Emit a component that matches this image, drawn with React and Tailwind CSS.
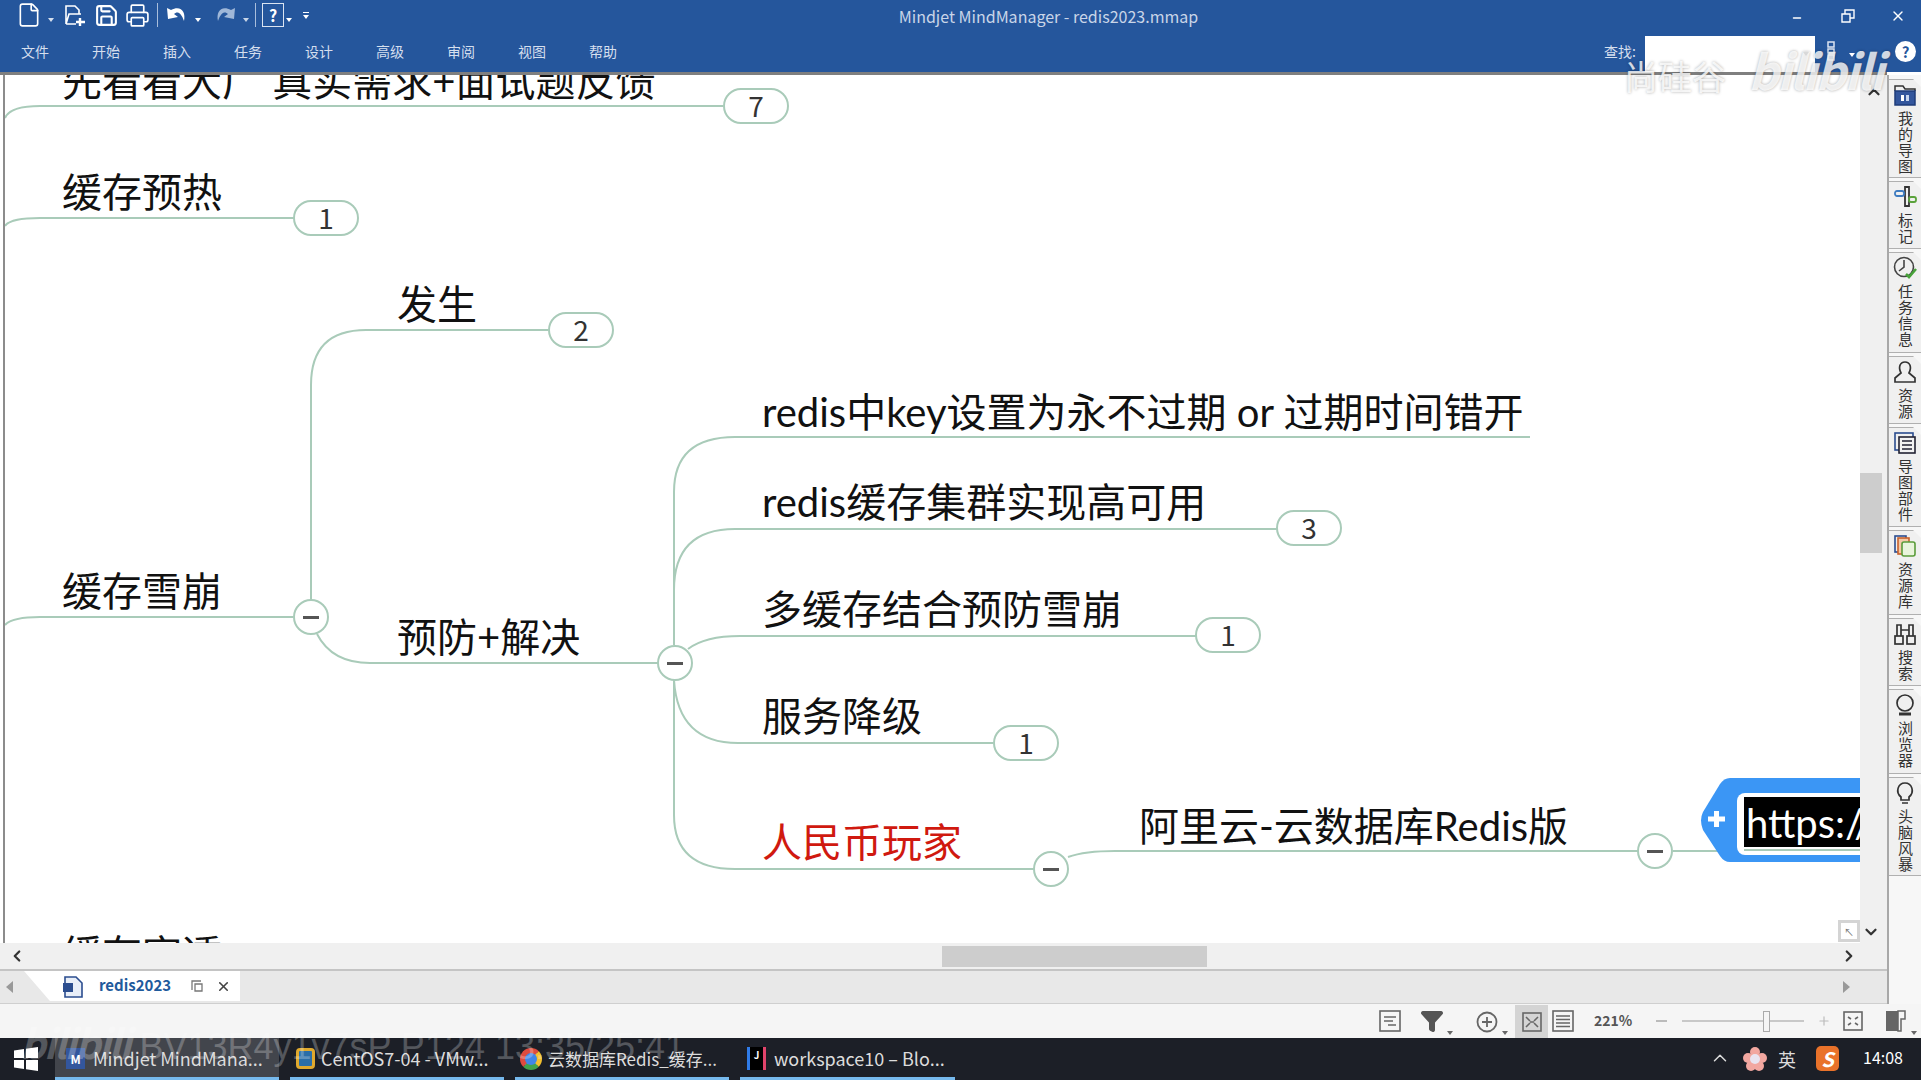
import { File, Save, Printer, ChevronUp, ChevronDown, ChevronLeft, ChevronRight, Filter, X, Minus, Plus } from 'lucide-react'

const nodeLines = [
  'M5 118 Q10 106 40 106 L723 106',
  'M5 226 Q10 218 40 218 L294 218',
  'M5 625 Q12 617 40 617 L293 617',
  'M311 599 L311 385 Q311 330 366 330 L548 330',
  'M317 634 Q332 663 370 663 L658 663',
  'M674 645 L674 492 Q674 437 735 437 L1530 437',
  'M674 590 Q674 529 735 529 L1277 529',
  'M688 649 Q705 636 740 636 L1196 636',
  'M674 680 Q678 743 738 743 L993 743',
  'M674 680 L674 815 Q674 869 735 869 L1034 869',
  'M1068 857 Q1085 851 1115 851 L1638 851',
  'M1673 851 L1742 851',
]

const topics = [
  { text: '先看看大厂 真实需求+面试题反馈', cls: 'left-[57px] top-[-14px]' },
  { text: '缓存预热', cls: 'left-[57px] top-[97px]' },
  { text: '发生', cls: 'left-[392px] top-[209px]' },
  { text: 'redis中key设置为永不过期 or 过期时间错开', cls: 'left-[757px] top-[317px]' },
  { text: 'redis缓存集群实现高可用', cls: 'left-[757px] top-[407px]' },
  { text: '缓存雪崩', cls: 'left-[57px] top-[496px]' },
  { text: '多缓存结合预防雪崩', cls: 'left-[757px] top-[514px]' },
  { text: '预防+解决', cls: 'left-[392px] top-[542px]' },
  { text: '服务降级', cls: 'left-[757px] top-[621px]' },
  { text: '人民币玩家', cls: 'left-[757px] top-[747px] text-[#d0190f]' },
  { text: '阿里云-云数据库Redis版', cls: 'left-[1134px] top-[731px]' },
  { text: '缓存穿透', cls: 'left-[57px] top-[859px]' },
]

const pills = [
  { n: 7, cls: 'left-[718px] top-[13px]' },
  { n: 1, cls: 'left-[288px] top-[125px]' },
  { n: 2, cls: 'left-[543px] top-[237px]' },
  { n: 3, cls: 'left-[1271px] top-[435px]' },
  { n: 1, cls: 'left-[1190px] top-[542px]' },
  { n: 1, cls: 'left-[988px] top-[650px]' },
]

const collapsers = [
  'left-[288px] top-[524px]',
  'left-[652px] top-[570px]',
  'left-[1028px] top-[776px]',
  'left-[1632px] top-[758px]',
]

const menus = ['文件', '开始', '插入', '任务', '设计', '高级', '审阅', '视图', '帮助']

const Arrow = () => <span className="inline-block w-0 h-0 border-x-[3px] border-x-transparent border-t-[4px] border-t-current" />

const TitleBar = () => (
  <div className="h-[72px] bg-[#25569c] text-[#d5dfee] relative shrink-0">
    <div className="h-[30px] flex items-center pl-[16px] relative">
      <File size={26} strokeWidth={1.5} className="text-white" />
      <span className="ml-[6px] mr-[9px]"><Arrow /></span>
      <svg width="26" height="26" viewBox="0 0 26 26" fill="none" stroke="white" strokeWidth="1.6" className="mr-[5px]">
        <path d="M3 22 V4 H12 L16 8 V12 M3 22 L6 12 H18 M3 22 H13" />
        <path d="M17 16 V24 M13 20 H22" strokeWidth="2.4" />
      </svg>
      <Save size={25} strokeWidth={2} className="text-white mr-[6px]" />
      <Printer size={25} strokeWidth={1.6} className="text-white" />
      <span className="w-px h-[24px] bg-[#a9bedc] mx-[7px]" />
      <svg width="24" height="22" viewBox="0 0 24 22" fill="white">
        <path d="M2 4 L3 15 L13 13 L9 10 C12 7 16 8 19 17 C21 8 16 1 6 6 Z" />
      </svg>
      <span className="ml-[6px] mr-[12px] text-white"><Arrow /></span>
      <svg width="24" height="22" viewBox="0 0 24 22" fill="#9fb7d8">
        <path d="M22 4 L21 15 L11 13 L15 10 C12 7 8 8 5 17 C3 8 8 1 18 6 Z" />
      </svg>
      <span className="ml-[6px] mr-[6px] text-[#c7d5e8]"><Arrow /></span>
      <span className="w-px h-[24px] bg-[#a9bedc] mr-[6px]" />
      <span className="w-[22px] h-[24px] border border-[#dbe4f1] text-white text-[16px] leading-[22px] text-center font-bold">?</span>
      <span className="ml-[2px] mr-[11px] text-white"><Arrow /></span>
      <span className="flex flex-col items-center gap-[2px] text-white">
        <span className="w-[6px] h-px bg-white" />
        <Arrow />
      </span>
    </div>
    <div className="absolute left-0 right-0 top-[4px] text-center text-[16px] text-[#c9d5e8]">
      <span className="ml-[176px]">Mindjet MindManager - redis2023.mmap</span>
    </div>
    <div className="absolute right-0 top-0 h-[32px] flex items-center text-white">
      <Minus size={12} strokeWidth={3} className="mt-[4px]" />
      <svg width="14" height="14" viewBox="0 0 14 14" fill="none" stroke="white" strokeWidth="1.4" className="ml-[38px]">
        <path d="M1 5 H9 V13 H1 Z M4 5 V1 H13 V9 H9" />
      </svg>
      <X size={16} strokeWidth={2} className="ml-[35px] mr-[15px]" />
    </div>
    <div className="h-[42px] flex items-center pl-[21px] pt-[1px] gap-[43px] text-[14px] relative">
      {menus.map((m) => <span key={m}>{m}</span>)}
      <div className="absolute left-[1604px] top-0 h-[42px] w-[317px] flex items-center">
        <span className="w-[41px] text-[14px]">查找:</span>
        <div className="w-[170px] h-[36px] mt-[6px] bg-white flex items-center justify-end pr-[6px] text-[#555]"><Arrow /></div>
        <svg width="22" height="22" viewBox="0 0 22 22" fill="none" stroke="#dbe4f1" strokeWidth="1.5" className="ml-[9px]">
          <path d="M4 2 H10 V7 H4 Z M4 9 H10 V13 H4 Z M4 15 H10 V20 H4 Z" />
        </svg>
        <span className="ml-[3px] text-white"><Arrow /></span>
        <span className="ml-[40px] w-[21px] h-[21px] rounded-full bg-white text-[#25569c] text-[15px] font-bold leading-[21px] text-center">?</span>
      </div>
    </div>
  </div>
)

const Canvas = () => (
  <div className="flex-1 relative overflow-hidden bg-white border-l-[2px] border-[#8c8c8c] ml-[3px]">
    <svg className="absolute left-[-5px] top-[-2px]" width="1866" height="870" viewBox="0 73 1866 870" fill="none" stroke="#a9cbb9" strokeWidth="2">
      {nodeLines.map((d) => <path key={d} d={d} />)}
    </svg>
    {topics.map((t) => (
      <div key={t.text} className={`absolute whitespace-pre text-[40px] leading-[40px] font-['Lato','Noto_Sans_CJK_SC',sans-serif] ${t.cls}`}>{t.text}</div>
    ))}
    {pills.map((p) => (
      <div key={p.cls} className={`absolute w-[66px] h-[36px] rounded-full border-[2px] border-[#a9cbb9] bg-white text-[28px] leading-[31px] text-center text-[#333] ${p.cls}`}>{p.n}</div>
    ))}
    {collapsers.map((c) => (
      <div key={c} className={`absolute w-[36px] h-[36px] rounded-full border-[2px] border-[#a9cbb9] bg-white flex items-center justify-center ${c}`}>
        <span className="w-[16px] h-[3px] bg-[#555]" />
      </div>
    ))}
    <div className="absolute left-[1695px] top-[703px] w-[165px] h-[84px]">
      <svg className="absolute inset-0" width="165" height="84" viewBox="0 0 165 84">
        <path d="M30 0 H165 V84 H30 Q24 84 20 78 L3 52 Q-1 42 3 34 L20 6 Q24 0 30 0 Z" fill="#3b96f5" />
        <path d="M8 41 H25 M16.5 33 V49" stroke="white" strokeWidth="5" />
      </svg>
      <div className="absolute left-[37px] top-[15px] right-0 h-[62px] bg-white rounded-l-[8px] pl-[7px] pt-[4px]">
        <div className="h-[50px] bg-black text-white text-[40px] leading-[52px] overflow-hidden whitespace-nowrap pl-[2px] font-['Lato',sans-serif]">https://</div>
        <div className="h-[2px] mt-[2px] bg-[#a9cbb9]" />
      </div>
    </div>
  </div>
)

const VScroll = () => (
  <div className="w-[27px] bg-[#f0f0f0] flex flex-col items-center relative shrink-0">
    <ChevronUp size={18} strokeWidth={3} className="text-[#333] mt-[8px]" />
    <div className="w-[22px] h-[80px] bg-[#cdcdcd] mt-[372px] self-start" />
    <div className="absolute left-[-22px] bottom-[1px] w-[22px] h-[22px] bg-white border-[3px] border-[#d4d4d4] flex items-center justify-center text-[10px] text-[#777]">↖</div>
    <ChevronDown size={18} strokeWidth={3} className="absolute bottom-[2px] left-[2px] text-[#333]" />
  </div>
)

const tabs = [
  {
    label: '我的导图', h: 'h-[99px]',
    icon: <svg width="24" height="24" viewBox="0 0 24 24" fill="none" stroke="#333" strokeWidth="1.5"><path d="M2 8 V3 H10 L12 6 H22 V8" /><rect x="2" y="8" width="20" height="14" fill="#33569d" stroke="#1f3d7a" /><rect x="8" y="12" width="3" height="6" fill="white" stroke="none" /><rect x="13" y="12" width="3" height="6" fill="#c6d5ee" stroke="none" /></svg>,
  },
  {
    label: '标记', h: 'h-[68px]',
    icon: <svg width="24" height="24" viewBox="0 0 24 24" fill="none" strokeWidth="1.8"><path d="M12 2 H16 V21 H12 Z" stroke="#333" /><rect x="2" y="6" width="9" height="5" rx="2" stroke="#3f7cc0" /><rect x="16" y="12" width="7" height="5" rx="2" stroke="#5aa23b" /></svg>,
  },
  {
    label: '任务信息', h: 'h-[101px]',
    icon: <svg width="24" height="24" viewBox="0 0 24 24" fill="none" strokeWidth="1.6"><circle cx="11" cy="11" r="9.5" stroke="#444" /><path d="M11 4 V11 L6 15" stroke="#444" /><path d="M13 18 L16 21 L23 13" stroke="#47a23a" strokeWidth="2.6" /></svg>,
  },
  {
    label: '资源', h: 'h-[68px]',
    icon: <svg width="24" height="24" viewBox="0 0 24 24" fill="none" stroke="#333" strokeWidth="1.7"><path d="M8 13 C5 7 7 2 12 2 C17 2 19 7 16 13 L22 18 V22 H2 V18 Z" /></svg>,
  },
  {
    label: '导图部件', h: 'h-[100px]',
    icon: <svg width="24" height="24" viewBox="0 0 24 24" fill="none" stroke="#223" strokeWidth="1.6"><rect x="2" y="2" width="18" height="17" stroke="#2b4d8f" /><rect x="6" y="6" width="16" height="16" fill="#f2f2f2" /><path d="M9 10 H19 M9 14 H19 M9 18 H19" /></svg>,
  },
  {
    label: '资源库', h: 'h-[85px]',
    icon: <svg width="24" height="24" viewBox="0 0 24 24" fill="none" strokeWidth="1.6"><rect x="2" y="2" width="11" height="16" stroke="#2b4d8f" /><rect x="5" y="4" width="11" height="16" fill="#f3c9a8" stroke="#c9622c" /><rect x="9" y="8" width="13" height="14" rx="2" fill="#e9f4dc" stroke="#5a9c3a" /></svg>,
  },
  {
    label: '搜索', h: 'h-[68px]',
    icon: <svg width="24" height="24" viewBox="0 0 24 24" fill="none" stroke="#333" strokeWidth="1.7"><rect x="2" y="14" width="8" height="8" /><rect x="14" y="14" width="8" height="8" /><path d="M4 14 V3 H8 V14 M16 14 V3 H20 V14 M8 8 H16" /></svg>,
  },
  {
    label: '浏览器', h: 'h-[85px]',
    icon: <svg width="24" height="24" viewBox="0 0 24 24" fill="none" stroke="#333" strokeWidth="1.7"><circle cx="12" cy="10" r="8" /><path d="M6 21 H18" strokeWidth="3" /></svg>,
  },
  {
    label: '头脑风暴', h: 'h-[99px]',
    icon: <svg width="24" height="24" viewBox="0 0 24 24" fill="none" stroke="#333" strokeWidth="1.7"><path d="M8 16 C2 11 5 2 12 2 C19 2 22 11 16 16 V19 H8 Z M9 22 H15" /></svg>,
  },
]

const Sidebar = () => (
  <div className="w-[34px] shrink-0 bg-[#f7f7f7] border-l-[2px] border-[#a8a8a8] flex flex-col pt-[4px] gap-[3px]">
    {tabs.map((t) => (
      <div key={t.label} className={`${t.h} bg-[#f0f0f0] border-y border-[#b0b0b0] [clip-path:polygon(0_0,calc(100%-8px)_0,100%_8px,100%_100%,0_100%)] flex flex-col items-center pt-[3px] shrink-0`}>
        {t.icon}
        <span className="[writing-mode:vertical-rl] whitespace-nowrap text-[15px] leading-[16px] text-[#333] mt-[4px] tracking-[1px]">{t.label}</span>
      </div>
    ))}
  </div>
)

const HScroll = () => (
  <div className="h-[28px] bg-[#f0f0f0] border-b-[2px] border-[#c4c4c4] flex items-center relative shrink-0">
    <ChevronLeft size={18} strokeWidth={3} className="ml-[8px] text-[#333]" />
    <div className="absolute left-[942px] top-[3px] w-[265px] h-[21px] bg-[#cdcdcd]" />
    <ChevronRight size={18} strokeWidth={3} className="absolute left-[1840px] text-[#333]" />
  </div>
)

const TabBar = () => (
  <div className="h-[33px] bg-[#e8e8e8] border-b border-[#cfcfcf] flex items-center relative shrink-0">
    <span className="ml-[6px] w-0 h-0 border-y-[6px] border-y-transparent border-r-[7px] border-r-[#999]" />
    <div className="absolute left-[24px] top-0 h-[30px] w-[216px] bg-white [clip-path:polygon(0_0,100%_0,100%_100%,12%_100%)]" />
    <svg width="24" height="24" viewBox="0 0 24 24" fill="none" className="absolute left-[61px] top-[4px]">
      <path d="M4 2 H15 L21 8 V22 H4 Z" stroke="#2b4d8f" strokeWidth="1.6" fill="#e8eef8" />
      <rect x="2" y="8" width="10" height="9" fill="#2b4d8f" />
    </svg>
    <span className="absolute left-[99px] top-[3px] text-[15px] font-bold text-[#1f5a9c]">redis2023</span>
    <svg width="12" height="12" viewBox="0 0 12 12" fill="none" stroke="#777" strokeWidth="1.3" className="absolute left-[191px] top-[9px]">
      <path d="M1 10 V1 H10 M4 4 H11 V11 H4 Z" />
    </svg>
    <X size={15} strokeWidth={2.5} className="absolute left-[216px] top-[8px] text-[#444]" />
    <span className="absolute left-[1843px] top-[10px] w-0 h-0 border-y-[6px] border-y-transparent border-l-[7px] border-l-[#999]" />
  </div>
)

const StatusBar = () => (
  <div className="h-[34px] bg-[#f5f5f5] flex items-center relative shrink-0 text-[#666]">
    <svg width="22" height="22" viewBox="0 0 22 22" fill="none" stroke="#666" strokeWidth="1.6" className="absolute left-[1379px] top-[6px]">
      <rect x="1" y="1" width="20" height="20" />
      <path d="M5 7 H17 M5 11 H14 M9 15 H17" />
    </svg>
    <Filter size={24} fill="#555" stroke="#555" className="absolute left-[1420px] top-[5px]" />
    <span className="absolute left-[1447px] top-[12px]"><Arrow /></span>
    <svg width="24" height="24" viewBox="0 0 24 24" fill="none" stroke="#666" strokeWidth="1.8" className="absolute left-[1475px] top-[5px]">
      <circle cx="12" cy="13" r="9.5" />
      <path d="M7 13 H17 M12 8 V18" />
    </svg>
    <span className="absolute left-[1502px] top-[12px]"><Arrow /></span>
    <div className="absolute left-[1515px] top-[1px] w-[33px] h-[33px] bg-[#d4d4d4] flex items-center justify-center">
      <svg width="20" height="20" viewBox="0 0 20 20" fill="none" stroke="#666" strokeWidth="1.6">
        <rect x="1" y="1" width="18" height="18" />
        <path d="M4 5 L8 9 M16 5 L12 9 M4 15 L8 11 M16 15 L12 11 M8 10 H12" />
      </svg>
    </div>
    <svg width="22" height="22" viewBox="0 0 22 22" fill="none" stroke="#666" strokeWidth="1.6" className="absolute left-[1552px] top-[6px]">
      <rect x="1" y="1" width="20" height="20" />
      <path d="M4 6 H18 M4 9.5 H18 M4 13 H18 M4 16.5 H18" />
    </svg>
    <span className="absolute left-[1594px] top-[6px] text-[14px] font-semibold text-[#555]">221%</span>
    <span className="absolute left-[1656px] top-[16px] w-[11px] h-[2px] bg-[#bbb]" />
    <span className="absolute left-[1682px] top-[16px] w-[122px] h-[2px] bg-[#c8c8c8]" />
    <span className="absolute left-[1763px] top-[7px] w-[7px] h-[21px] bg-[#f5f5f5] border border-[#aaa]" />
    <Plus size={14} className="absolute left-[1817px] top-[10px] text-[#bbb]" />
    <svg width="20" height="20" viewBox="0 0 20 20" fill="none" stroke="#666" strokeWidth="1.6" className="absolute left-[1843px] top-[7px]">
      <rect x="1" y="1" width="18" height="18" />
      <path d="M5 6 L8 8 M15 6 L12 8 M5 14 L8 12 M15 14 L12 12" />
    </svg>
    <svg width="22" height="22" viewBox="0 0 22 22" className="absolute left-[1885px] top-[6px]">
      <rect x="1" y="1" width="12" height="20" fill="#666" />
      <path d="M13 1 H20 V9 H16 V21 H13 Z" fill="#f5f5f5" stroke="#666" strokeWidth="1.5" />
    </svg>
    <span className="absolute left-[1911px] top-[12px]"><Arrow /></span>
  </div>
)

const taskItems = [
  { label: 'Mindjet MindMana...', cls: 'w-[224px] pl-[11px] gap-[8px] text-[18px] bg-[#42454c]', icon: <span className="w-[19px] h-[21px] bg-[#33569d] text-white text-[12px] font-bold leading-[21px] text-center">M</span> },
  { label: 'CentOS7-04 - VMw...', cls: 'w-[214px] pl-[6px] gap-[6px] text-[18px]', icon: <span className="w-[19px] h-[21px] rounded-[4px] border-[3px] border-[#e0a92e] bg-[#2a6ea8]" /> },
  { label: '云数据库Redis_缓存...', cls: 'w-[214px] pl-[5px] gap-[6px] text-[17px]', icon: <span className="w-[22px] h-[22px] rounded-full bg-[#3f86e8] border-[5px] border-t-[#dd4b3e] border-r-[#f3c02e] border-b-[#3fa34d] border-l-[#dd4b3e]" /> },
  { label: 'workspace10 – Blo...', cls: 'w-[215px] pl-[7px] gap-[8px] text-[18px]', icon: <span className="w-[19px] h-[23px] bg-black border-l-[3px] border-r-[3px] border-l-[#2f7be8] border-r-[#e0436b] text-white text-[10px] text-center font-bold">J</span> },
]

const Taskbar = () => (
  <div className="h-[42px] bg-[#1c1f27] flex items-center relative shrink-0 text-[#dcdcdc] text-[16px]">
    <svg width="26" height="26" viewBox="0 0 26 26" fill="white" className="ml-[13px] mr-[16px] shrink-0">
      <path d="M1 4.5 L11 3 V12 H1 Z M13 2.7 L25 1 V12 H13 Z M1 14 H11 V23 L1 21.5 Z M13 14 H25 V25 L13 23.3 Z" />
    </svg>
    <div className="flex gap-[11px] h-full">
      {taskItems.map((t) => (
        <div key={t.label} className={`h-full flex items-center pt-[2px] border-b-[3px] border-[#76b9ed] whitespace-nowrap overflow-hidden ${t.cls}`}>
          {t.icon}
          <span>{t.label}</span>
        </div>
      ))}
    </div>
    <ChevronUp size={22} strokeWidth={1.6} className="absolute left-[1709px] top-[9px]" />
    <svg width="24" height="24" viewBox="0 0 24 24" className="absolute left-[1743px] top-[9px]">
      <circle cx="12" cy="5" r="5" fill="#f2a7a0" />
      <circle cx="5" cy="11" r="5" fill="#f2a7a0" />
      <circle cx="19" cy="11" r="5" fill="#f2a7a0" />
      <circle cx="8" cy="19" r="5" fill="#f2a7a0" />
      <circle cx="16" cy="19" r="5" fill="#f2a7a0" />
      <circle cx="12" cy="12" r="5" fill="#e9e4f0" />
    </svg>
    <span className="absolute left-[1778px] top-[8px] text-[18px]">英</span>
    <div className="absolute left-[1816px] top-[8px] w-[23px] h-[25px] rounded-[5px] bg-[#e9722a] text-white text-[20px] font-bold italic leading-[25px] text-center">S</div>
    <span className="absolute left-[1863px] top-[7px] text-[16px] text-white">14:08</span>
  </div>
)

const App = () => (
  <div className="h-screen w-full flex flex-col overflow-hidden relative bg-white font-['Noto_Sans_CJK_SC','Noto_Sans',sans-serif] text-[#111]">
    <TitleBar />
    <div className="h-[3px] bg-[#7f7f7f] shrink-0 mr-[34px]" />
    <div className="flex-1 flex min-h-0">
      <div className="flex-1 flex flex-col min-w-0">
        <div className="flex-1 flex min-h-0">
          <Canvas />
          <VScroll />
        </div>
        <HScroll />
        <TabBar />
      </div>
      <Sidebar />
    </div>
    <StatusBar />
    <Taskbar />

    {/* video watermarks */}
    <div className="absolute left-[1624px] top-[40px] h-[56px] flex items-end text-white/80 [text-shadow:0_0_3px_rgba(0,0,0,0.35)] pointer-events-none">
      <span className="text-[34px] leading-[40px]">尚硅谷</span>
      <span className="text-[48px] leading-[54px] font-bold italic tracking-[-2px] ml-[22px]">bilibili</span>
    </div>
    <div className="absolute left-[20px] top-[1012px] flex items-end gap-[10px] text-white/25 pointer-events-none">
      <span className="text-[40px] leading-[60px] font-bold italic tracking-[-2px]">bilibili</span>
      <span className="text-[36px] leading-[50px] font-['Liberation_Sans',sans-serif]">BV13R4y1v7sP P124 13:35/25:41</span>
    </div>
  </div>
)

export default App
